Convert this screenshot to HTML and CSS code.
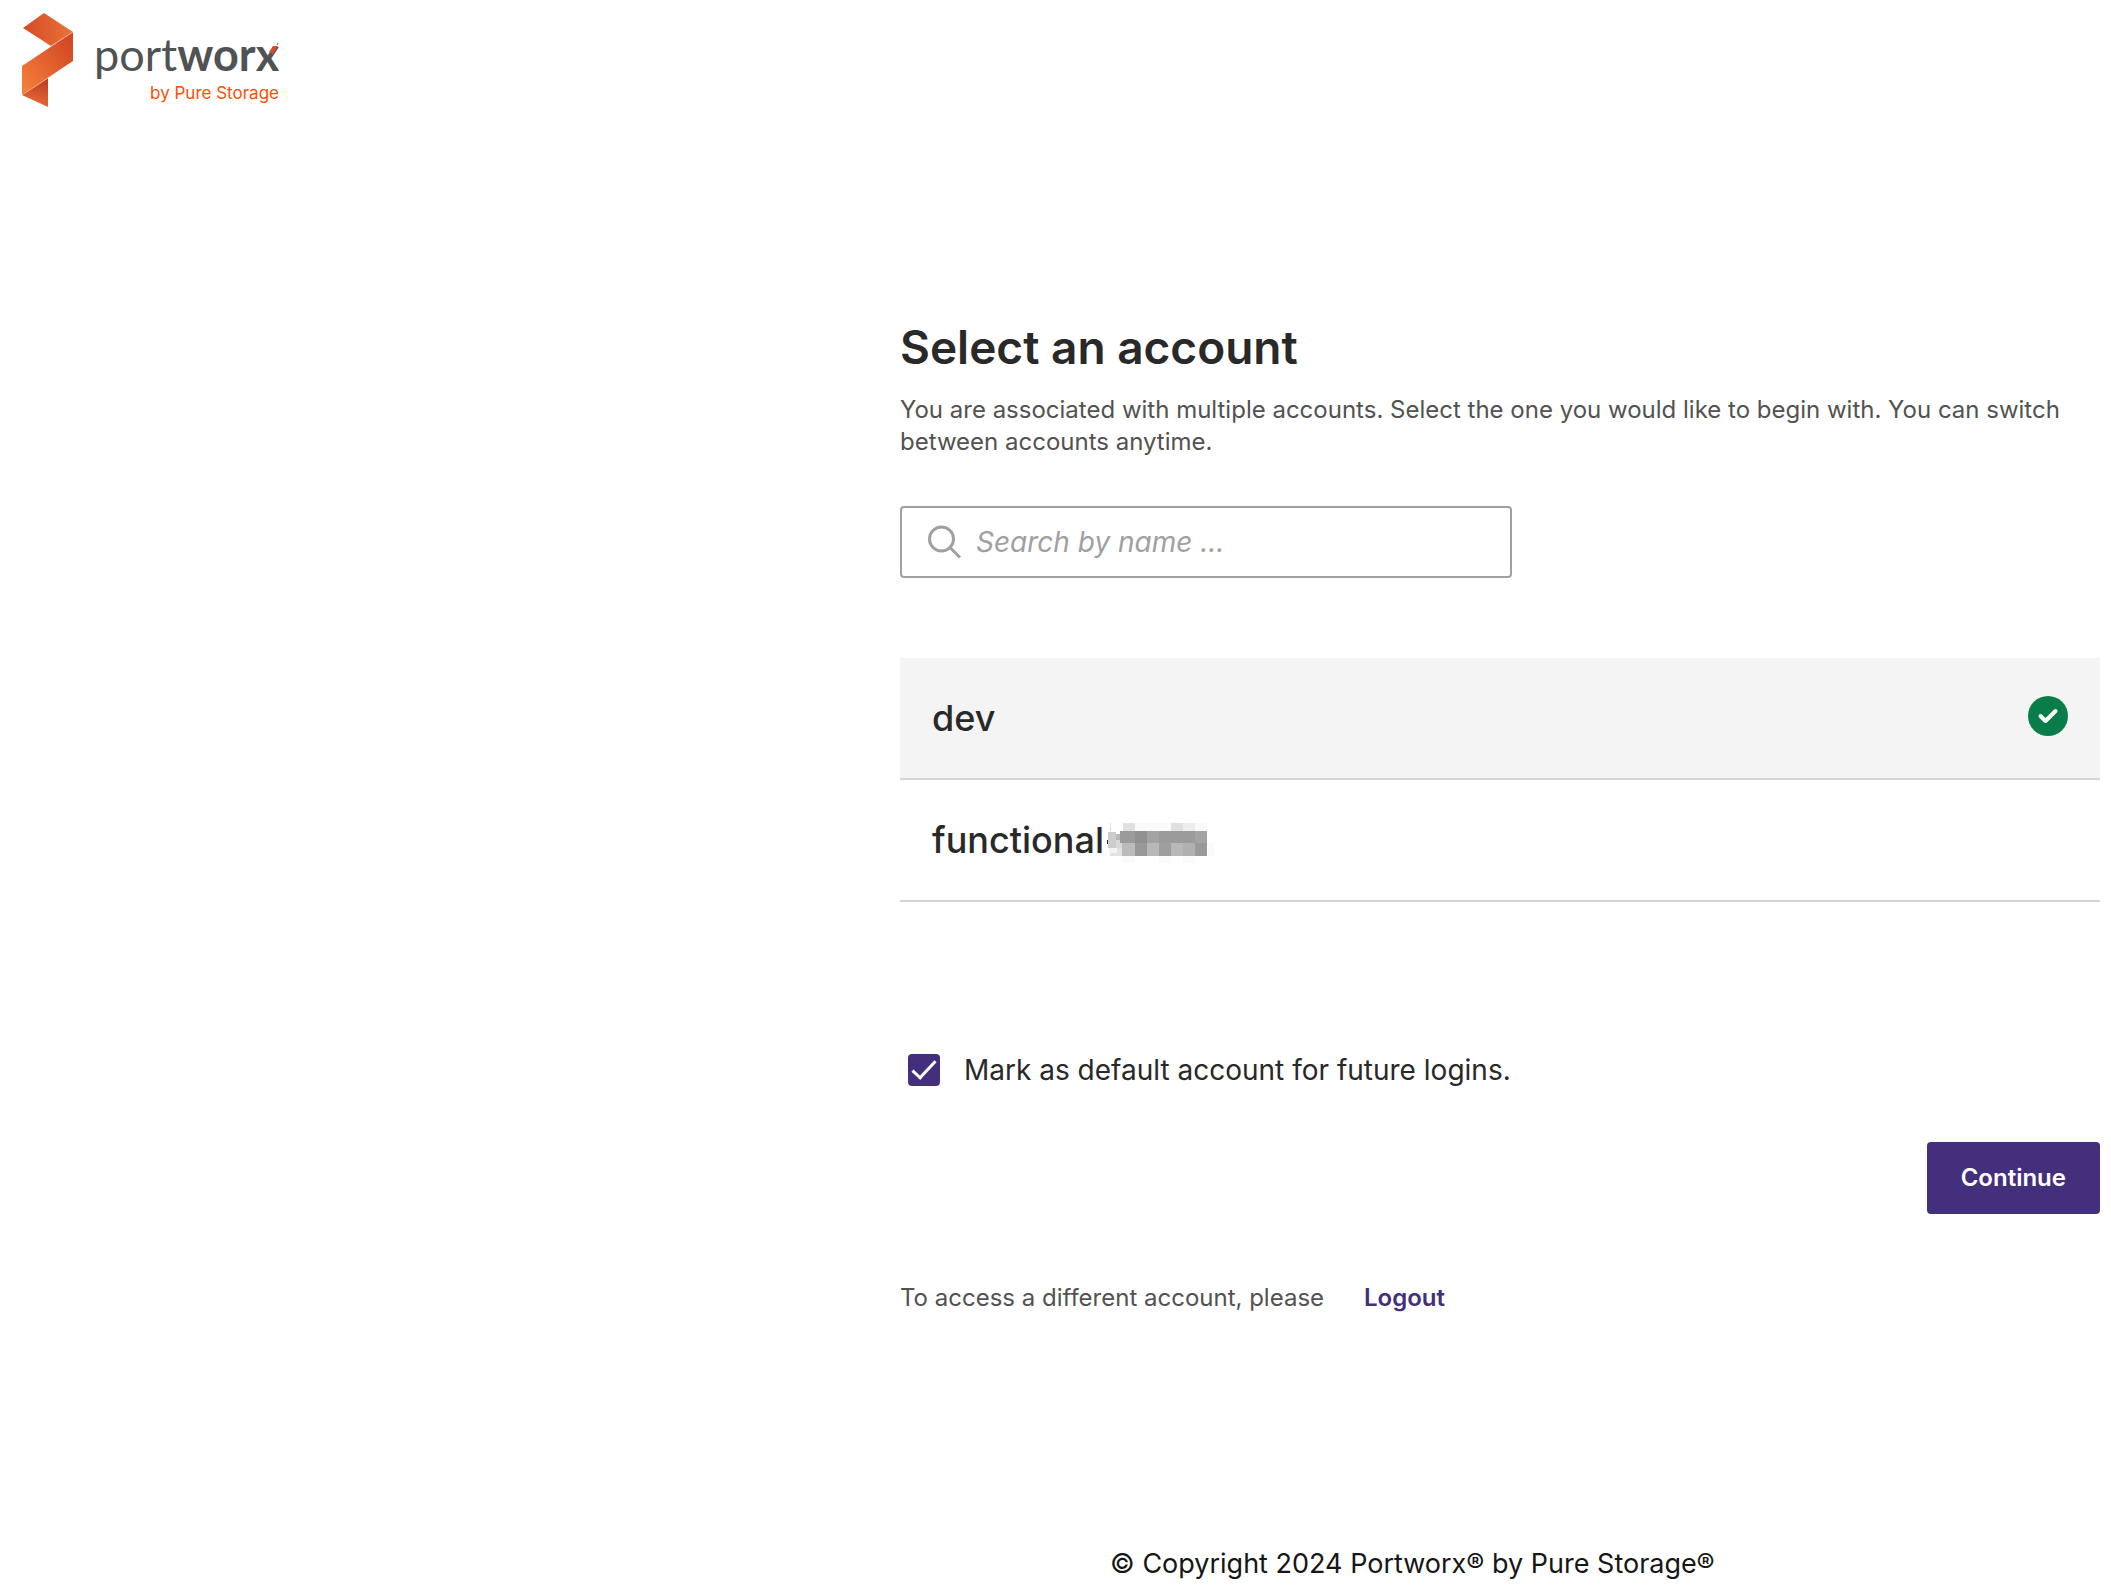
FILE: index.html
```
<!DOCTYPE html>
<html lang="en">
<head>
    <meta charset="UTF-8">
    <meta name="viewport" content="width=device-width, initial-scale=1.0">
    <title>Select an account | Portworx</title>
    <link rel="stylesheet" href="styles.css">
</head>
<body>
    <header class="header">
        <svg class="logo-mark" width="52" height="94" viewBox="0 0 52 94" aria-hidden="true">
            <defs>
                <linearGradient id="top" x1="0" y1="0" x2="1" y2="0">
                    <stop offset="0" stop-color="#d64a27"/>
                    <stop offset="1" stop-color="#ea7339"/>
                </linearGradient>
                <linearGradient id="mid" x1="1" y1="0" x2="0" y2="1">
                    <stop offset="0.1" stop-color="#d34826"/>
                    <stop offset="0.9" stop-color="#f37c3a"/>
                </linearGradient>
                <linearGradient id="low" x1="0.8" y1="0" x2="0.6" y2="1">
                    <stop offset="0" stop-color="#bd3a24"/>
                    <stop offset="1" stop-color="#e66d36"/>
                </linearGradient>
            </defs>
            <path d="M1 15 22 0 51 19 29 33Z" fill="url(#top)"/>
            <path d="M51 19V48L0 82V53Z" fill="url(#mid)"/>
            <path d="M0 82 26 65V94Z" fill="url(#low)"/>
            <path d="M29 33 51 19M0 82 26 65" stroke="#f0a184" stroke-width="1"/>
        </svg>
        <div class="logo-text">
            <div class="logo-name">port<strong>worx</strong>
                <svg class="logo-accent" width="10" height="14" viewBox="0 0 10 14" aria-hidden="true">
                    <path d="M0 9 4 3H9L4 11Z" fill="#dd4a27"/>
                    <path d="M8 2 9 0" stroke="#dd4a27"/>
                </svg>
            </div>
            <div class="logo-tagline">by Pure Storage</div>
        </div>
    </header>

    <main class="content">
        <h1>Select an account</h1>
        <p class="description">You are associated with multiple accounts. Select the one you would like to begin with. You can switch between accounts anytime.</p>

        <label class="search">
            <svg width="34" height="34" viewBox="0 0 34 34" fill="none" stroke="#a0a0a0" stroke-width="3" aria-hidden="true">
                <circle cx="13.500" cy="14" r="12"/>
                <path d="M22 22.500 32 32.500"/>
            </svg>
            <input type="search" placeholder="Search by name ..." aria-label="Search by name">
        </label>

        <ul class="accounts">
            <li>
                <button type="button" class="account selected">
                    <span>dev</span>
                    <svg class="account-check" width="40" height="44" viewBox="0 0 40 44" aria-hidden="true">
                        <circle cx="20" cy="20" r="20" fill="#087d49"/>
                        <path d="M12.500 20 17.500 25 27.500 15" fill="none" stroke="#fff" stroke-width="4" stroke-linecap="round" stroke-linejoin="round"/>
                    </svg>
                </button>
            </li>
            <li>
                <button type="button" class="account">
                    <span>functional</span>
                    <!-- redacted part of the name -->
                    <svg class="redacted" width="110" height="46" viewBox="0 -6 110 46" shape-rendering="crispEdges" aria-hidden="true">
                        <path d="M3 17h2v4H3z" fill="#292929"/>
                        <path d="M6 0h1v8H6z" fill="#ddd"/>
                        <path d="M4 9h8v16H4z" fill="#ccc"/>
                        <path d="M12 11h6v14h-6z" fill="#d8d8d8"/>
                        <path d="M12 11h4v6h-4z" fill="#b8b8b8"/>
                        <path d="M5 25h8v5H5z" fill="#f3f3f3"/>
                        <path d="M6 30h12v3H6zM13 25h5v5h-5z" fill="#e2e2e2"/>
                        <path d="M19 0h12v8H19z" fill="#e0e0e0"/>
                        <path d="M31 0h36v8H31zM91 0h12v8H91z" fill="#fafafa"/>
                        <path d="M67 0h12v8H67z" fill="#e0e0e0"/>
                        <path d="M79 0h12v8H79z" fill="#ededed"/>
                        <path d="M16 8h87v12H16z" fill="#9b9b9b"/>
                        <path d="M31 8h12v12H31z" fill="#919191"/>
                        <path d="M43 8h12v12H43zM91 8h12v12H91z" fill="#a3a3a3"/>
                        <path d="M18 20h13v13H18z" fill="#bbb"/>
                        <path d="M31 20h12v13H31zM91 20h12v13H91z" fill="#999"/>
                        <path d="M43 20h12v13H43zM67 20h12v13H67z" fill="#b8b8b8"/>
                        <path d="M55 20h12v13H55z" fill="#9e9e9e"/>
                        <path d="M79 20h12v13H79z" fill="#b0b0b0"/>
                        <path d="M19 33h12v7H19zM55 33h12v7H55zM79 33h12v7H79zM104 20h6v13h-6z" fill="#fafafa"/>
                    </svg>
                </button>
            </li>
        </ul>

        <label class="default-account">
            <input type="checkbox" checked>
            <span>Mark as default account for future logins.</span>
        </label>

        <div class="actions">
            <button type="button" class="btn">Continue</button>
        </div>

        <p class="logout">
            <span>To access a different account, please</span>
            <a href="#">Logout</a>
        </p>
    </main>

    <footer class="footer">© Copyright 2024 Portworx® by Pure Storage®</footer>
</body>
</html>
```

FILE: styles.css
```
* { margin: 0; padding: 0; box-sizing: border-box; }
body {
    font-family: Inter, "Liberation Sans", sans-serif;
    font-size: 24px;
    line-height: 32px;
    color: #292929;
    background: #fff;
    min-height: 100vh;
    display: flex;
    flex-direction: column;
}
button, input {
    font: inherit;
    color: inherit;
}
.header {
    display: flex;
    gap: 20px;
    padding: 13px 22px 0;
}
.logo-text {
    padding-top: 17px;
    width: 185px;
}
.logo-name {
    position: relative;
    font-family: Lato, "Open Sans", sans-serif;
    font-size: 45px;
    font-weight: 400;
    line-height: 48px;
    color: #505254;
    white-space: nowrap;
}
.logo-name strong {
    font-weight: 700;
}
.logo-accent {
    position: absolute;
    top: 13px;
    right: 0;
}
.logo-tagline {
    padding-top: 3px;
    font-size: 17px;
    line-height: 24px;
    color: #fe5000;
    text-align: right;
}
.content {
    width: 100%;
    max-width: 1211px;
    margin-left: auto;
    margin-top: 208px;
    padding-right: 11px;
}
h1 {
    font-size: 46px;
    font-weight: 600;
    line-height: 64px;
    margin-bottom: 15px;
}
.description {
    color: #525252;
    margin-bottom: 48px;
}
.search {
    display: flex;
    align-items: center;
    gap: 14px;
    max-width: 612px;
    height: 72px;
    padding: 0 26px;
    border: 2px solid #a0a0a0;
    border-radius: 4px;
    margin-bottom: 80px;
}
.search input {
    flex: 1;
    min-width: 0;
    font-size: 28px;
    line-height: 40px;
    border: none;
    outline: none;
    background: none;
}
.search input::placeholder {
    color: #a0a0a0;
    font-style: italic;
    opacity: 1;
}
.accounts {
    list-style: none;
    margin-bottom: 148px;
}
.account {
    display: flex;
    align-items: center;
    width: 100%;
    height: 122px;
    padding: 0 32px;
    font-size: 36px;
    font-weight: 500;
    text-align: left;
    background: none;
    border: none;
    border-bottom: 2px solid #d4d4d4;
    cursor: pointer;
}
.account.selected {
    background: #f4f4f4;
}
.account-check {
    margin-left: auto;
}
.default-account {
    display: flex;
    align-items: center;
    gap: 24px;
    font-size: 28px;
    line-height: 40px;
    padding-left: 8px;
    margin-bottom: 52px;
}
.default-account input {
    appearance: none;
    display: grid;
    place-items: center;
    width: 32px;
    height: 32px;
    border-radius: 4px;
    border: 2px solid #432f7b;
}
.default-account input:checked {
    background: #432f7b;
}
.default-account input:checked::before {
    content: '';
    width: 21px;
    height: 9px;
    border: solid #fff;
    border-width: 0 0 3px 3px;
    transform: translateY(-3px) rotate(-47deg);
}
.actions {
    display: flex;
    justify-content: flex-end;
    margin-bottom: 68px;
}
.btn {
    height: 72px;
    padding: 0 34px;
    font-weight: 600;
    color: #fff;
    background: #432f7b;
    border: none;
    border-radius: 4px;
    cursor: pointer;
}
.logout {
    display: flex;
    gap: 40px;
    color: #525252;
}
.logout a {
    color: #432f7b;
    font-weight: 600;
    text-decoration: none;
}
.footer {
    margin-top: auto;
    padding: 0 4px 7px 34%;
    font-size: 27px;
    line-height: 40px;
    color: #161616;
    text-align: center;
}
```
